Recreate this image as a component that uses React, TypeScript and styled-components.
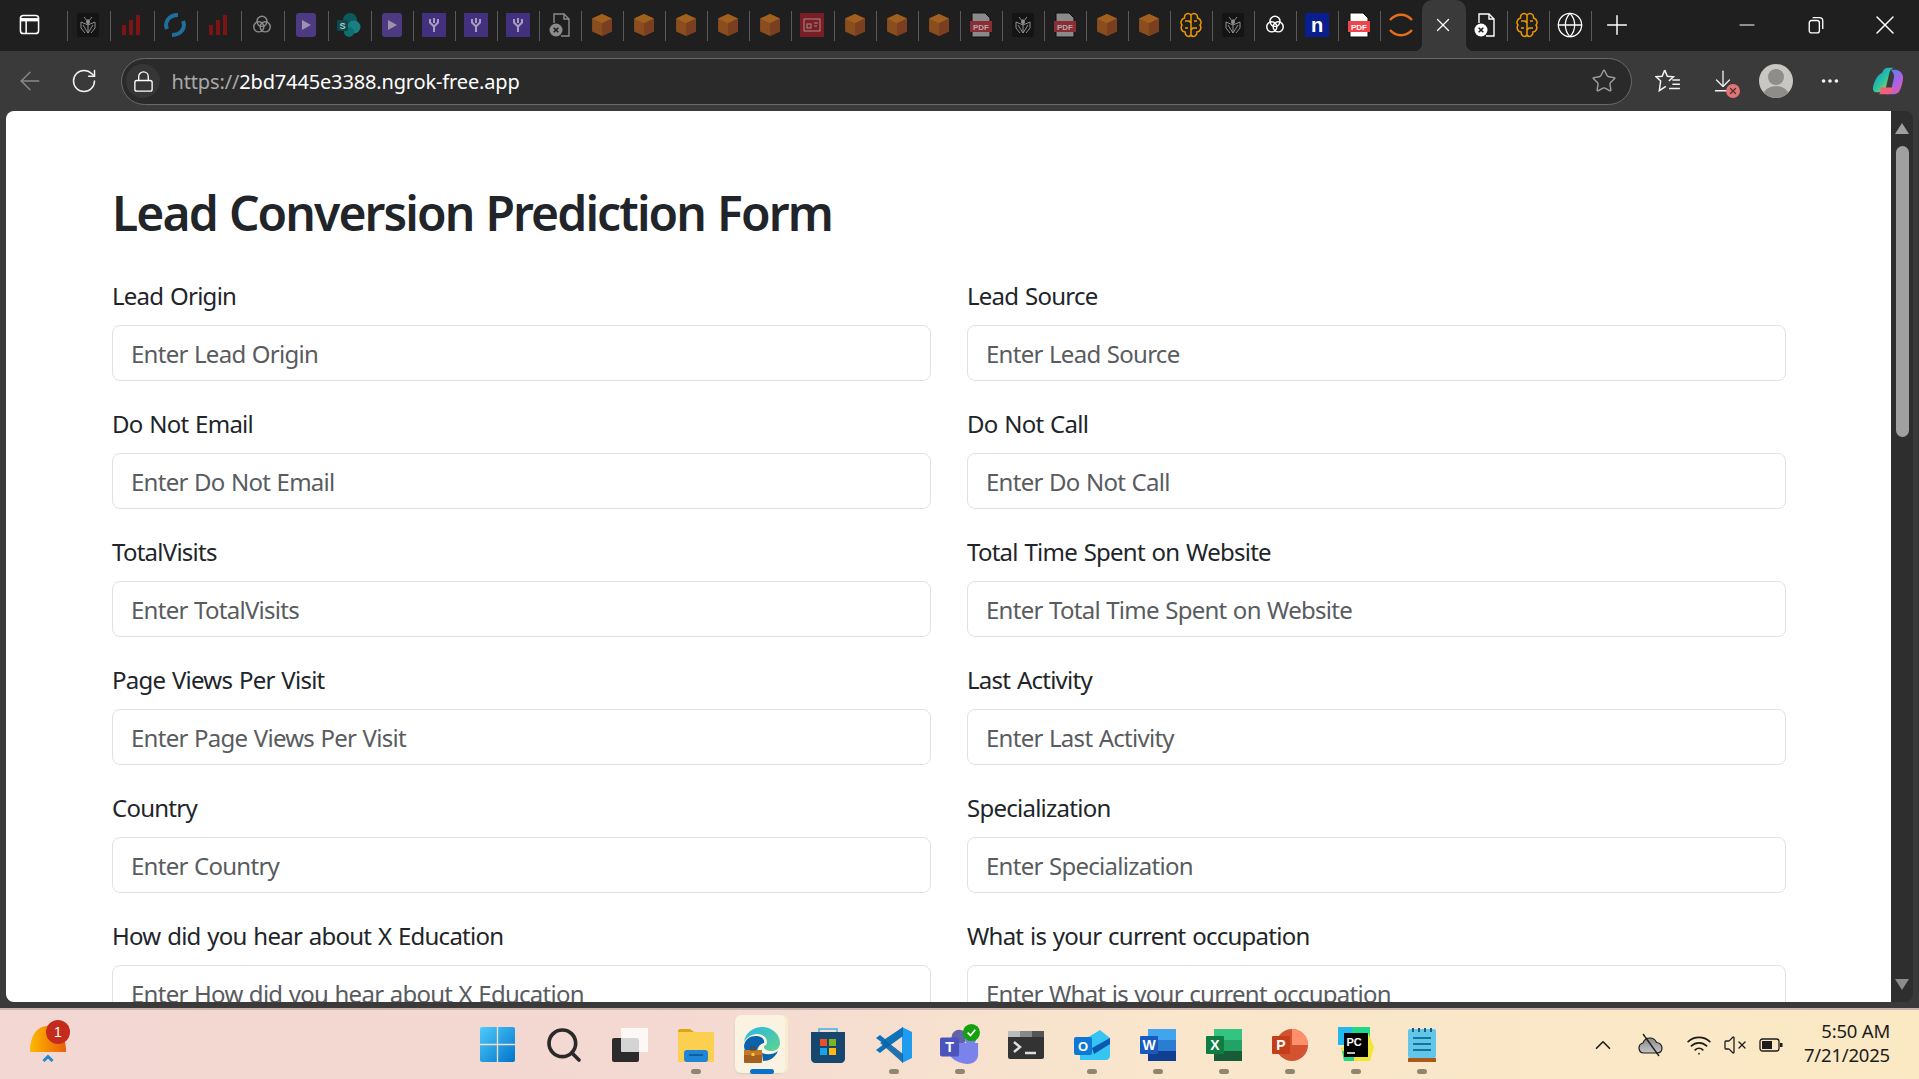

import React from "react";
import styled, { createGlobalStyle } from "styled-components";
import { Star, RotateCw, ArrowLeft, Lock, X, Plus, Minus, Search, MoreHorizontal, ChevronUp, Globe, Wifi, VolumeX, ArrowDownToLine } from "lucide-react";

const Global = createGlobalStyle`
  html, body { margin: 0; padding: 0; height: 100%; overflow: hidden; background: #3a3a3a; }
  #root { height: 1079px; }
  * { box-sizing: border-box; }
`;

const Screen = styled.div`
  width: 1919px; height: 1079px; display: flex; flex-direction: column;
  font-family: "Noto Sans", "Open Sans", sans-serif; overflow: hidden;
`;
const TabStrip = styled.div`
  height: 51px; background: #1f1f1f; display: flex; align-items: flex-start; flex: none;
`;
const SideToggle = styled.div`
  width: 66.5px; height: 51px; display: flex; align-items: center; justify-content: center; flex: none; padding: 0 7px 2px 0;
`;
const TabCell = styled.div<{ $sep?: boolean; $w: number; $pr?: number }>`
  width: ${(p) => p.$w}px; height: 51px; flex: none; display: flex; align-items: center; justify-content: center;
  padding-bottom: 2px; padding-right: ${(p) => p.$pr ?? 0}px; position: relative;
  ${(p) => p.$sep ? `&::before { content: ""; position: absolute; left: 0; top: 11px; height: 30px; width: 1px; background: #5a5a5a; }` : ""}
`;
const ActiveTab = styled.div`
  width: 44px; height: 51px; flex: none; background: #3a3a3a; border-radius: 10px 10px 0 0;
  display: flex; align-items: center; justify-content: center; color: #fff; position: relative; padding: 0 2px 2px 0;
  &::before, &::after { content: ""; position: absolute; bottom: 0; width: 8px; height: 8px; }
  &::before { left: -8px; background: radial-gradient(circle at 0 0, transparent 8px, #3a3a3a 8.5px); }
  &::after { right: -8px; background: radial-gradient(circle at 100% 0, transparent 8px, #3a3a3a 8.5px); }
`;
const Spacer = styled.div`flex: 1;`;
const WinBtn = styled.div`
  width: 69px; height: 51px; display: flex; align-items: center; justify-content: center; color: #fff; flex: none; padding-bottom: 2px;
`;
const AddressRow = styled.div`
  height: 60px; background: #3a3a3a; flex: none; display: flex; align-items: center;
`;
const NavBtn = styled.div<{ $w: number; $dim?: boolean }>`
  width: ${(p) => p.$w}px; height: 40px; display: flex; align-items: center; justify-content: center; flex: none;
  color: ${(p) => (p.$dim ? "#8a8a8a" : "#f2f2f2")}; position: relative;
`;
const UrlBar = styled.div`
  width: 1511px; height: 47px; border: 1.5px solid #6a6a6a; border-radius: 24px; background: #2a2a2a;
  display: flex; align-items: center; flex: none; margin: 0 8px 0 13px; padding-right: 14px;
`;
const LockWrap = styled.div`
  width: 34px; height: 34px; border-radius: 50%; background: #363636; display: flex; align-items: center; justify-content: center;
  color: #fff; margin-left: 4px; flex: none;
`;
const UrlText = styled.div`
  font-size: 20px; color: #fff; margin-left: 11.5px; flex: 1; letter-spacing: -0.15px; white-space: nowrap;
`;
const UrlScheme = styled.span`color: #a8a8a8;`;
const ErrDot = styled.span`
  position: absolute; right: 10px; bottom: 3px; width: 14px; height: 14px; border-radius: 50%; background: #e57373;
  display: flex; align-items: center; justify-content: center; color: #3a3a3a;
`;
const Avatar = styled.div`
  width: 34px; height: 34px; border-radius: 50%; background: #c9c7c3; position: relative; overflow: hidden;
`;
const AvatarHead = styled.div`
  position: absolute; left: 9px; top: 5px; width: 16px; height: 16px; border-radius: 50%; background: #8f8d8a;
`;
const AvatarBody = styled.div`
  position: absolute; left: 4px; top: 22px; width: 26px; height: 20px; border-radius: 50%; background: #8f8d8a;
`;
const Viewport = styled.div`
  flex: none; height: 897px; background: #3a3a3a; padding: 0 6px 6px 6px; display: flex;
`;
const Page = styled.div`
  width: 1885px; height: 891px; background: #fff; border-radius: 8px 0 0 8px; overflow: hidden; flex: none;
  padding: 73px 0 0 106px; color: #212529;
`;
const Title = styled.h2`
  margin: 0 0 36px; font-size: 48px; font-weight: 600; line-height: 58px; color: #212529; letter-spacing: -1.9px;
  word-spacing: 1.5px; white-space: nowrap;
`;
const Grid = styled.div`
  display: grid; grid-template-columns: 819px 819px; column-gap: 36px; row-gap: 25px;
`;
const Field = styled.div`display: flex; flex-direction: column;`;
const Label = styled.label`
  font-size: 24px; line-height: 36px; margin-bottom: 11px; height: 36px; letter-spacing: -0.75px; word-spacing: 1.2px; white-space: nowrap;
`;
const Input = styled.input`
  height: 56px; width: 100%; border: 1px solid #dee2e6; border-radius: 8px; padding: 0 18px; font: inherit; font-size: 24px;
  letter-spacing: -0.72px; word-spacing: 0.8px; background: #fff;
  &::placeholder { color: #595c5f; opacity: 1; }
`;
const Scrollbar = styled.div`
  width: 22px; height: 891px; background: #2e2e2e; flex: none; position: relative; border-radius: 0 8px 8px 0;
`;
const ScrollThumb = styled.div`
  position: absolute; left: 5px; top: 35px; width: 13px; height: 291px; background: #a0a0a0; border-radius: 7px;
`;
const ScrollArrow = styled.div<{ $down?: boolean }>`
  position: absolute; left: 4px; ${(p) => (p.$down ? "bottom: 12px;" : "top: 12px;")} width: 0; height: 0;
  border-left: 7.5px solid transparent; border-right: 7.5px solid transparent;
  ${(p) => (p.$down ? "border-top: 11px solid #8c8c8c;" : "border-bottom: 11px solid #a0a0a0;")}
`;
const Taskbar = styled.div`
  flex: none; height: 71px; display: flex; align-items: center; position: relative;
  background: linear-gradient(90deg, #f3d7d2 0%, #f4d9d2 35%, #f9e6cc 60%, #fbe9c4 100%);
  border-top: 2px solid #c9b4ae;
`;
const NotifArea = styled.div`
  width: 66px; margin-left: 30px; height: 50px; position: relative; flex: none;
`;
const Badge = styled.div`
  position: absolute; left: 16px; top: 0; width: 24px; height: 24px; border-radius: 50%; background: #c42b1c;
  color: #fff; font-size: 14px; font-family: "Liberation Sans", sans-serif; display: flex; align-items: center; justify-content: center;
`;
const Tray = styled.div`
  position: absolute; left: 464.5px; top: 0; bottom: 0; display: flex; align-items: center;
`;
const TaskIcon = styled.div<{ $active?: boolean }>`
  width: 66px; height: 68px; display: flex; align-items: center; justify-content: center; position: relative; flex: none;
  ${(p) => p.$active ? `&::before { content: ""; position: absolute; left: 6.5px; top: 4.5px; width: 50px; height: 58px; background: #fbf3e2; border-radius: 6px; box-shadow: 3px 0 0 #f7ebd2, 0 1px 2px #d8cdb4; } svg { position: relative; }` : ""}
`;
const Pip = styled.span<{ $active?: boolean }>`
  position: absolute; bottom: 5px; left: 50%; transform: translateX(-50%); height: 5px; border-radius: 3px;
  width: ${(p) => (p.$active ? 24 : 10)}px; background: ${(p) => (p.$active ? "#0a70c8" : "#8f8672")};
`;
const SysArea = styled.div`
  position: absolute; right: 0; top: 0; bottom: 0; display: flex; align-items: center; color: #1c1c1c;
`;
const SysIcon = styled.div<{ $w: number }>`
  width: ${(p) => p.$w}px; display: flex; justify-content: center; align-items: center; flex: none;
`;
const Clock = styled.div`
  width: 125px; padding-right: 29px; margin-bottom: 4px; text-align: right; font-size: 18.5px; line-height: 24px; color: #1c1c1c;
  font-family: "Noto Sans", sans-serif; letter-spacing: -0.2px; flex: none;
`;

const Cube = () => (
  <svg width="22" height="24" viewBox="0 0 20 26" preserveAspectRatio="none">
    <path d="M10 1 19 6v14l-9 5-9-5V6z" fill="#8a4d1e" />
    <path d="M10 1 19 6l-9 5-9-5z" fill="#a2601f" />
    <path d="M10 11l9-5v14l-9 5z" fill="#7a3f20" />
  </svg>
);
const Bars = () => (
  <svg width="20" height="22" viewBox="0 0 20 22">
    <rect x="0" y="11" width="4" height="10" fill="#7d1414" />
    <rect x="7" y="6" width="4" height="15" fill="#7d1414" />
    <rect x="14" y="1" width="4" height="20" fill="#7d1414" />
  </svg>
);
const Bug = ({ c = "#8f8f8f" }: { c?: string }) => (
  <svg width="24" height="24" viewBox="0 0 22 24">
    <rect width="22" height="24" rx="2" fill="#141414" />
    <path d="M7 4l4 5 4-5M11 6v14M4 9l7 3 7-3M4 9v6l4 5M18 9v6l-4 5M6 12l5 8 5-8" stroke={c} strokeWidth="1" fill="none" />
    <circle cx="11" cy="9" r="2" fill={c} />
  </svg>
);
const Spiral = ({ c = "#8b8b8b", s = 22 }: { c?: string; s?: number }) => (
  <svg width={s} height={s} viewBox="0 0 24 24" fill="none" stroke={c} strokeWidth="1.6">
    <circle cx="12" cy="8" r="5.5" /><circle cx="8.5" cy="14" r="5.5" /><circle cx="15.5" cy="14" r="5.5" />
  </svg>
);
const Sync = () => (
  <svg width="24" height="26" viewBox="0 0 24 26" fill="none" strokeWidth="4">
    <path d="M4 17C1 10 6 3 15 3" stroke="#1e6f9c" /><path d="M20 9c3 7-2 14-11 14" stroke="#1e6f9c" />
  </svg>
);
const Purple = () => (
  <svg width="20" height="24" viewBox="0 0 20 24">
    <rect width="20" height="24" rx="3" fill="#4e3a83" /><path d="M6 7l9 5-9 5z" fill="#9a93ad" />
  </svg>
);
const Share = () => (
  <svg width="24" height="26" viewBox="0 0 24 26">
    <circle cx="13" cy="8" r="7" fill="#0c5a5c" /><circle cx="17" cy="15" r="6.5" fill="#1a7f80" /><circle cx="12" cy="20" r="5" fill="#0f6e70" />
    <rect x="0" y="8" width="11" height="11" rx="1" fill="#0a4a4d" />
    <text x="5.5" y="17" fontSize="9" fill="#b9c9c9" textAnchor="middle" fontFamily="Liberation Sans" fontWeight="700">S</text>
  </svg>
);
const Funnel = () => (
  <svg width="24" height="24" viewBox="0 0 24 24">
    <rect width="24" height="24" fill="#43307e" />
    <path d="M7 6h2v3l3 3 3-3V6h2v4l-4 4v5h-2v-5l-4-4zM11 5h2v5h-2z" fill="#a79dbd" />
  </svg>
);
const DocX = ({ c = "#8c8c8c", s = 26 }: { c?: string; s?: number }) => (
  <svg width={s - 4} height={s} viewBox="0 0 22 26" fill="none">
    <path d="M5 11V2h10l5 5v17h-8" stroke={c} strokeWidth="1.4" /><path d="M15 2v5h5" stroke={c} strokeWidth="1.4" />
    <circle cx="7" cy="18" r="6.5" fill={c} /><path d="M4.7 15.7l4.6 4.6m0-4.6-4.6 4.6" stroke="#1f1f1f" strokeWidth="1.6" />
  </svg>
);
const IdCard = () => (
  <svg width="24" height="24" viewBox="0 0 24 24">
    <rect width="24" height="24" fill="#7a1e26" />
    <rect x="4" y="6" width="16" height="12" fill="none" stroke="#a78a8c" /><rect x="7" y="11" width="4" height="4" fill="none" stroke="#a78a8c" />
    <path d="M14 10h4M14 13h3" stroke="#a78a8c" />
  </svg>
);
const Pdf = ({ bright }: { bright?: boolean }) => (
  <svg width="24" height="26" viewBox="0 0 24 26">
    <path d="M3 1h13l5 5v19H3z" fill={bright ? "#fff" : "#8a8a8a"} stroke="#111" />
    <rect x="1" y="9" width="22" height="11" fill={bright ? "#f0444b" : "#8a2d34"} />
    <text x="12" y="18" fontSize="8" fontWeight="700" textAnchor="middle" fill={bright ? "#fff" : "#b9a9ab"} fontFamily="Liberation Sans">PDF</text>
  </svg>
);
const Brain = ({ c = "#ef9800" }: { c?: string }) => (
  <svg width="24" height="26" viewBox="0 0 24 26" fill="none" stroke={c} strokeWidth="1.5">
    <path d="M12 3C9 0 5 2 5.5 6 2 7 1 11 3 13c-2 3 0 7 3 7 0 4 4 6 6 3 2 3 6 1 6-3 3 0 5-4 3-7 2-2 1-6-2.500-7C19 2 15 0 12 3zM12 3v20M6 9h4l2 2M18 9h-3M6 16h3M18 16h-4l-2 2" />
  </svg>
);
const NBox = () => (
  <svg width="24" height="24" viewBox="0 0 24 24">
    <rect width="24" height="24" fill="#0a1f8f" />
    <text x="12" y="19" fontSize="20" fontWeight="700" textAnchor="middle" fill="#fff" fontFamily="Liberation Sans">n</text>
  </svg>
);
const Arc = () => (
  <svg width="24" height="26" viewBox="0 0 24 26" fill="none" stroke="#ea6d1b" strokeWidth="2.400">
    <path d="M1 8c6-7 16-7 22 0M1 18c6 7 16 7 22 0" />
  </svg>
);
const SideIcon = () => (
  <svg width="21" height="21" viewBox="0 0 22 22" fill="none" stroke="#fff" strokeWidth="1.6">
    <rect x="1.500" y="1.500" width="19" height="19" rx="3" /><path d="M1.500 6h19" strokeWidth="3.500" /><path d="M7.500 6v14" />
  </svg>
);
const FavList = () => (
  <svg width="26" height="26" viewBox="0 0 24 24" fill="none" stroke="#f2f2f2" strokeWidth="1.400">
    <path d="M9 2l2.400 5.600 5.600.5-4.200 3.900" /><path d="M9 2 6.600 7.600 1 8.100l4.200 3.900L4 21l6-4" /><path d="M16 11h7M16 15h7M13 19h10" />
  </svg>
);
const Copilot = () => (
  <svg width="34" height="32" viewBox="0 0 34 34">
    <defs>
      <linearGradient id="cp1" x1="0" y1="0" x2="1" y2="1"><stop offset="0" stopColor="#0a8ee0" /><stop offset=".5" stopColor="#2bc4a0" /><stop offset="1" stopColor="#f7c431" /></linearGradient>
      <linearGradient id="cp2" x1="0" y1="0" x2="1" y2="1"><stop offset="0" stopColor="#2e8ef0" /><stop offset=".6" stopColor="#b060e8" /><stop offset="1" stopColor="#f0607a" /></linearGradient>
    </defs>
    <path d="M11 8c1-3 3-5 6-5h6c-3 1-4 3-5 7l-3 13c-1 4-3 6-7 6H4c-2 0-3-2-3-4 0-3 3-14 10-17z" fill="url(#cp1)" />
    <path d="M20 5h5c4 0 8 4 8 8 0 4-2 12-4 15-1 2-3 3-6 3h-8c3-1 5-3 6-7l2-9c1-4 0-7-3-10z" fill="url(#cp2)" />
    <path d="M9 24h14c0 4-2 7-6 7H7c2 0 2-3 2-7z" fill="#f0607a" />
  </svg>
);
const WinLogo = () => (
  <svg width="35" height="35" viewBox="0 0 36 36">
    <defs><linearGradient id="wl" x1="0" y1="0" x2="1" y2="1"><stop offset="0" stopColor="#4fcbfa" /><stop offset="1" stopColor="#0074cc" /></linearGradient></defs>
    <rect width="36" height="36" fill="url(#wl)" rx="2" />
    <path d="M18 0v36M0 18h36" stroke="#f4dcd2" strokeWidth="1.400" />
  </svg>
);
const TaskView = () => (
  <svg width="36" height="34" viewBox="0 0 36 34">
    <rect x="0" y="10" width="27" height="24" rx="2" fill="#2b2b2b" />
    <rect x="9" y="0" width="27" height="24" rx="1" fill="#fff" opacity=".8" />
  </svg>
);
const Folder = () => (
  <svg width="36" height="34" viewBox="0 0 36 34">
    <path d="M0 3c0-1 1-2 2-2h10l4 3h18c1 0 2 1 2 2v3H0z" fill="#dba60f" />
    <rect y="4" width="36" height="30" rx="1" fill="#fbcf50" />
    <rect x="6" y="22" width="24" height="12" rx="3" fill="#1f86d6" /><path d="M11 27h14" stroke="#0d4f8e" strokeWidth="1.500" />
  </svg>
);
const Edge = () => (
  <svg width="36" height="38" viewBox="0 0 36 38">
    <defs><linearGradient id="eg" x1="0" y1="0" x2="1" y2="1"><stop offset="0" stopColor="#2bb6e8" /><stop offset="1" stopColor="#5fd48a" /></linearGradient></defs>
    <path d="M18 1c10 0 18 7 18 16 0 5-4 8-8 8-5 0-8-2-8-4 0-2 3-1 3-5 0-5-5-8-10-8-6 0-11 4-13 8C1 8 8 1 18 1z" fill="url(#eg)" />
    <path d="M0 20c1-7 6-10 12-10 6 0 9 4 8 7-5 1-8 6-7 14C5 29 0 26 0 20z" fill="#0c62ab" />
    <path d="M18 27c5 2 11 2 16-2-3 7-9 10-15 10z" fill="#0c62ab" />
    <rect x="0" y="24" width="18" height="13" rx="1" fill="#a5601f" /><rect x="0" y="24" width="18" height="5" fill="#c27a25" /><rect x="7" y="21" width="4" height="3" fill="none" stroke="#6b3f12" /><rect x="7.500" y="27" width="3" height="3" fill="#f4c542" />
  </svg>
);
const Store = () => (
  <svg width="36" height="36" viewBox="0 0 36 36">
    <path d="M9 6V2h18v4" fill="none" stroke="#38b2e8" strokeWidth="1.500" />
    <path d="M1 5h34v27c0 2-2 4-4 4H5c-2 0-4-2-4-4z" fill="#17476f" />
    <rect x="10" y="12" width="7" height="7" fill="#e8502a" /><rect x="19" y="12" width="7" height="7" fill="#7ab61f" /><rect x="10" y="21" width="7" height="7" fill="#17a3e8" /><rect x="19" y="21" width="7" height="7" fill="#fdb813" />
  </svg>
);
const VSCode = () => (
  <svg width="36" height="36" viewBox="0 0 36 36">
    <path d="M26 0l10 5v26l-10 5z" fill="#1f9cf0" />
    <path d="M27 0v9L9 22l-5 4-4-3 8-6-8-6 4-3 5 4z" fill="#0f72b8" />
    <path d="M27 27v9l-18-16-5-4 5-3z" fill="#0a65a8" opacity=".9" />
  </svg>
);
const Teams = () => (
  <svg width="40" height="42" viewBox="0 0 42 44">
    <circle cx="20" cy="14" r="8" fill="#6264a7" /><circle cx="32" cy="16" r="6" fill="#7b83eb" />
    <path d="M10 20h30v12c0 6-5 10-11 10S10 38 10 30z" fill="#7b83eb" />
    <rect x="0" y="14" width="20" height="20" rx="2" fill="#4b53bc" />
    <text x="10" y="29" textAnchor="middle" fontSize="15" fontWeight="700" fill="#fff" fontFamily="Liberation Sans">T</text>
    <circle cx="33" cy="9" r="9" fill="#13a10e" /><path d="M29 9l3 3 5-6" stroke="#fff" strokeWidth="1.800" fill="none" />
  </svg>
);
const Term = () => (
  <svg width="36" height="28" viewBox="0 0 36 28">
    <rect width="36" height="28" rx="2" fill="#333" /><rect width="12" height="6" fill="#bbb" /><rect x="12" width="12" height="6" fill="#888" /><rect x="24" width="12" height="6" fill="#555" />
    <path d="M6 11l6 5-6 5" stroke="#ddd" strokeWidth="2.500" fill="none" /><path d="M17 22h11" stroke="#ddd" strokeWidth="2.500" />
  </svg>
);
const Outlook = () => (
  <svg width="36" height="30" viewBox="0 0 36 30">
    <path d="M6 30V12L26 0l10 8v18c0 2-2 4-4 4z" fill="#35c5f0" /><path d="M18 18L36 8v6L20 24z" fill="#0a59b0" />
    <rect x="0" y="7" width="18" height="18" rx="2" fill="#0f78d4" />
    <text x="9" y="21" textAnchor="middle" fontSize="13" fontWeight="700" fill="#fff" fontFamily="Liberation Sans">O</text>
  </svg>
);
const Office = ({ a, b, c, d, l }: { a: string; b: string; c: string; d: string; l: string }) => (
  <svg width="36" height="32" viewBox="0 0 36 32">
    <rect x="8" width="28" height="11" fill={b} /><rect x="8" y="11" width="28" height="11" fill={c} /><rect x="8" y="22" width="28" height="10" fill={d} />
    <rect x="0" y="7" width="18" height="18" rx="1" fill={a} />
    <text x="9" y="21" textAnchor="middle" fontSize="14" fontWeight="700" fill="#fff" fontFamily="Liberation Sans">{l}</text>
  </svg>
);
const Ppt = () => (
  <svg width="36" height="32" viewBox="0 0 36 32">
    <circle cx="20" cy="16" r="16" fill="#d35230" /><path d="M20 0a16 16 0 0 1 16 16H20z" fill="#ff8f6b" />
    <rect x="0" y="7" width="18" height="18" rx="1" fill="#c43e1c" />
    <text x="9" y="21" textAnchor="middle" fontSize="14" fontWeight="700" fill="#fff" fontFamily="Liberation Sans">P</text>
  </svg>
);
const PyCharm = () => (
  <svg width="36" height="36" viewBox="0 0 36 36">
    <path d="M0 0h32v12H0z" fill="#21d789" /><path d="M0 0h14v18H0z" fill="#21b8f0" /><path d="M20 6h10l6 14-4 14H6L3 22z" fill="#f0e633" /><path d="M4 24h12v10H6z" fill="#21d789" />
    <rect x="6" y="6" width="24" height="24" fill="#000" />
    <text x="8.500" y="19" fontSize="11" fontWeight="700" fill="#fff" fontFamily="Liberation Sans">PC</text>
    <path d="M9 26h8" stroke="#fff" strokeWidth="1.500" />
  </svg>
);
const Notepad = () => (
  <svg width="28" height="36" viewBox="0 0 28 36">
    <rect y="2" width="28" height="29" rx="2" fill="#62c6e8" /><rect y="31" width="28" height="4" fill="#a9591a" />
    <path d="M5 1v4M11 1v4M17 1v4M23 1v4" stroke="#145f86" strokeWidth="2" />
    <path d="M5 11h18M5 17h18M5 23h18" stroke="#15749f" strokeWidth="1.800" />
  </svg>
);
const Bell = () => (
  <svg width="36" height="42" viewBox="0 0 36 42">
    <defs><linearGradient id="bl" x1="0" y1="0" x2="1" y2="0"><stop offset="0" stopColor="#fdb900" /><stop offset="1" stopColor="#e85f0a" /></linearGradient></defs>
    <path d="M0 32C0 14 8 6 18 6s18 8 18 26z" fill="url(#bl)" />
    <path d="M13.500 41l4.500-4.500 4.500 4.500" stroke="#1a8ad8" strokeWidth="3" fill="none" />
  </svg>
);
const Cloud = () => (
  <svg width="26" height="24" viewBox="0 0 26 24" fill="none">
    <defs><linearGradient id="cl" x1="0" y1="0" x2="0" y2="1"><stop offset="0" stopColor="#8a8a8a" /><stop offset="1" stopColor="#c4c4c4" /></linearGradient></defs>
    <path d="M6 20c-3 0-5-2-5-5 0-2.500 2-4.500 4-5 1-3 4-5 7-5 3 0 5.500 2 6.500 4.500 3 0 5.500 2.500 5.500 5.500s-2 5-5 5z" fill="url(#cl)" stroke="#1c1c1c" strokeWidth="1.200" />
    <path d="M5 1l16 22" stroke="#1c1c1c" strokeWidth="1.300" />
  </svg>
);
const Battery = () => (
  <svg width="24" height="14" viewBox="0 0 24 14" fill="none">
    <rect x="1" y="1" width="19" height="12" rx="2.500" stroke="#1c1c1c" strokeWidth="1.300" /><rect x="3" y="3" width="10" height="8" fill="#1c1c1c" /><rect x="21" y="5" width="2.500" height="4" fill="#1c1c1c" />
  </svg>
);

const fields = [
  "Lead Origin", "Lead Source", "Do Not Email", "Do Not Call", "TotalVisits", "Total Time Spent on Website",
  "Page Views Per Visit", "Last Activity", "Country", "Specialization",
  "How did you hear about X Education", "What is your current occupation",
];

const tabs: React.ReactNode[] = [
  <Bug />, <Bars />, <Sync />, <Bars />, <Spiral />, <Purple />, <Share />, <Purple />, <Funnel />, <Funnel />, <Funnel />, <DocX />,
  <Cube />, <Cube />, <Cube />, <Cube />, <Cube />, <IdCard />, <Cube />, <Cube />, <Cube />, <Pdf />, <Bug />, <Pdf />, <Cube />, <Cube />,
  <Brain />, <Bug />, <Spiral c="#fff" />, <NBox />, <Pdf bright />, <Arc />,
];

export default function App() {
  return (
    <Screen>
      <Global />
      <TabStrip>
        <SideToggle><SideIcon /></SideToggle>
        {tabs.map((t, i) => (
          <TabCell key={i} $sep $w={i < 7 ? 43.5 : 42.05}>{t}</TabCell>
        ))}
        <ActiveTab><X size={22} strokeWidth={1.4} /></ActiveTab>
        <TabCell $w={41} $pr={4}><DocX c="#fff" /></TabCell>
        <TabCell $sep $w={42} $pr={2}><Brain /></TabCell>
        <TabCell $sep $w={42}><Globe size={28} color="#fff" strokeWidth={1.1} /></TabCell>
        <TabCell $sep $w={54} $pr={2}><Plus size={32} color="#fff" strokeWidth={1.1} /></TabCell>
        <Spacer />
        <WinBtn><Minus size={24} strokeWidth={1.1} /></WinBtn>
        <WinBtn>
          <svg width="16" height="18" viewBox="0 0 14 16" fill="none" stroke="#fff" strokeWidth="1.200"><rect x="1" y="4" width="9" height="11" rx="2" /><path d="M4 1.500h6c2 0 3 1 3 3v7" /></svg>
        </WinBtn>
        <WinBtn><X size={32} strokeWidth={1.1} /></WinBtn>
      </TabStrip>
      <AddressRow>
        <NavBtn $w={60} $dim><ArrowLeft size={30} strokeWidth={1.1} /></NavBtn>
        <NavBtn $w={48}><RotateCw size={28} strokeWidth={1.3} /></NavBtn>
        <UrlBar>
          <LockWrap><Lock size={23} strokeWidth={1.4} /></LockWrap>
          <UrlText><UrlScheme>https://</UrlScheme>2bd7445e3388.ngrok-free.app</UrlText>
          <Star size={26} color="#a0a0a0" strokeWidth={1.3} />
        </UrlBar>
        <NavBtn $w={56}><FavList /></NavBtn>
        <NavBtn $w={54}><ArrowDownToLine size={26} strokeWidth={1.2} /><ErrDot><X size={10} strokeWidth={3} /></ErrDot></NavBtn>
        <NavBtn $w={52}><Avatar><AvatarHead /><AvatarBody /></Avatar></NavBtn>
        <NavBtn $w={56}><MoreHorizontal size={22} strokeWidth={2} /></NavBtn>
        <NavBtn $w={60}><Copilot /></NavBtn>
      </AddressRow>
      <Viewport>
        <Page>
          <Title>Lead Conversion Prediction Form</Title>
          <Grid>
            {fields.map((f) => (
              <Field key={f}>
                <Label>{f}</Label>
                <Input placeholder={`Enter ${f}`} readOnly />
              </Field>
            ))}
          </Grid>
        </Page>
        <Scrollbar><ScrollArrow /><ScrollThumb /><ScrollArrow $down /></Scrollbar>
      </Viewport>
      <Taskbar>
        <NotifArea><Bell /><Badge>1</Badge></NotifArea>
        <Tray>
          <TaskIcon><WinLogo /></TaskIcon>
          <TaskIcon><Search size={40} color="#2a2a2a" strokeWidth={2.200} /></TaskIcon>
          <TaskIcon><TaskView /></TaskIcon>
          <TaskIcon><Folder /><Pip /></TaskIcon>
          <TaskIcon $active><Edge /><Pip $active /></TaskIcon>
          <TaskIcon><Store /></TaskIcon>
          <TaskIcon><VSCode /><Pip /></TaskIcon>
          <TaskIcon><Teams /><Pip /></TaskIcon>
          <TaskIcon><Term /></TaskIcon>
          <TaskIcon><Outlook /><Pip /></TaskIcon>
          <TaskIcon><Office a="#185abd" b="#41a5ee" c="#2b7cd3" d="#103f91" l="W" /><Pip /></TaskIcon>
          <TaskIcon><Office a="#107c41" b="#33c481" c="#21a366" d="#185c37" l="X" /><Pip /></TaskIcon>
          <TaskIcon><Ppt /><Pip /></TaskIcon>
          <TaskIcon><PyCharm /><Pip /></TaskIcon>
          <TaskIcon><Notepad /><Pip /></TaskIcon>
        </Tray>
        <SysArea>
          <SysIcon $w={46}><ChevronUp size={26} strokeWidth={1.5} /></SysIcon>
          <SysIcon $w={50}><Cloud /></SysIcon>
          <SysIcon $w={46}><Wifi size={26} strokeWidth={1.6} /></SysIcon>
          <SysIcon $w={26}><VolumeX size={24} strokeWidth={1.3} /></SysIcon>
          <SysIcon $w={46}><Battery /></SysIcon>
          <Clock>5:50 AM<br />7/21/2025</Clock>
        </SysArea>
      </Taskbar>
    </Screen>
  );
}
